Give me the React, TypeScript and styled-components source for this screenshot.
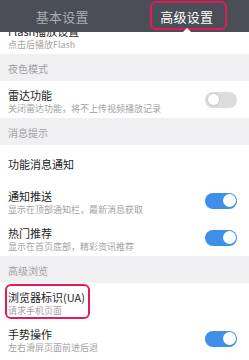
import React from "react";
import styled, { createGlobalStyle, css } from "styled-components";

const Global = createGlobalStyle`
  html, body { margin: 0; padding: 0; background: #fff; }
  body {
    width: 249px; height: 360px; overflow: hidden;
    font-family: "Noto Sans CJK SC", "Noto Sans", sans-serif;
  }
`;

const Page = styled.div`
  display: flex;
  flex-direction: column;
  width: 249px;
  height: 360px;
  overflow: hidden;
  background: #fff;
`;

const Header = styled.div`
  position: relative;
  z-index: 2;
  flex: 0 0 32px;
  height: 32px;
  display: grid;
  grid-template-columns: 1fr 1fr;
  background: #4a4f57;
`;

const Tab = styled.div<{ $active?: boolean }>`
  position: relative;
  display: flex;
  align-items: center;
  justify-content: center;
  font-size: 13px;
  letter-spacing: 0.3px;
  color: ${(p) => (p.$active ? "#ffffff" : "#a8adb4")};
  ${(p) =>
    p.$active &&
    css`
      &::after {
        content: "";
        position: absolute;
        bottom: 0;
        left: 50%;
        transform: translateX(-50%);
        border-left: 4px solid transparent;
        border-right: 4px solid transparent;
        border-bottom: 4px solid #ffffff;
      }
    `}
`;

const Highlight = styled.span<{ $inset: string }>`
  position: relative;
  line-height: 17px;
  &::before {
    content: "";
    position: absolute;
    inset: ${(p) => p.$inset};
    border: 2.5px solid #e5185a;
    border-radius: 6px;
    pointer-events: none;
  }
`;

const Viewport = styled.div`
  flex: 1;
  overflow: hidden;
`;

const List = styled.div`
  margin-top: -15px;
  display: flex;
  flex-direction: column;
`;

const Section = styled.div`
  height: 27px;
  display: flex;
  align-items: center;
  padding-left: 8px;
  padding-top: 1px;
  box-sizing: border-box;
  background: #f0f0f2;
  color: #a0a0a0;
  font-size: 10px;
`;

const Row = styled.div`
  height: 37px;
  display: flex;
  align-items: center;
  justify-content: space-between;
  padding: 0 12px 0 8px;
  box-sizing: border-box;
  background: #fff;
`;

const Texts = styled.div`
  display: flex;
  flex-direction: column;
  align-self: flex-start;
  padding-top: 6px;
`;

const TextBox = styled.div`
  position: relative;
  display: flex;
  flex-direction: column;
`;

const Title = styled.div`
  font-size: 11px;
  line-height: 16px;
  color: #1e1e1e;
`;

const Sub = styled.div`
  font-size: 9px;
  line-height: 12px;
  color: #a3a3a3;
`;

const Toggle = styled.div<{ $on?: boolean }>`
  position: relative;
  width: 32px;
  height: 16px;
  border-radius: 8px;
  flex: 0 0 auto;
  background: ${(p) => (p.$on ? "#3f8ee8" : "#dcdcdc")};
  &::after {
    content: "";
    position: absolute;
    top: 1.5px;
    ${(p) => (p.$on ? "right: 1.5px;" : "left: 1.5px;")}
    width: 13px;
    height: 13px;
    border-radius: 50%;
    background: #fff;
    box-sizing: border-box;
    ${(p) => !p.$on && "border: 1px solid #c9c9c9;"}
  }
`;

const UABox = styled(TextBox)`
  &::before {
    content: "";
    position: absolute;
    inset: -5px -5px -2px -3px;
    border: 2.5px solid #e5185a;
    border-radius: 6px;
    pointer-events: none;
  }
`;

type Item = {
  title: string;
  sub?: string;
  toggle?: boolean;
  highlight?: boolean;
};

const SettingRow = ({ title, sub, toggle, highlight }: Item) => {
  const Box = highlight ? UABox : TextBox;
  return (
    <Row>
      {sub ? (
        <Texts>
          <Box>
            <Title>{title}</Title>
            <Sub>{sub}</Sub>
          </Box>
        </Texts>
      ) : (
        <Title>{title}</Title>
      )}
      {toggle !== undefined && <Toggle $on={toggle} />}
    </Row>
  );
};

export default function App() {
  return (
    <>
      <Global />
      <Page>
        <Header>
          <Tab>基本设置</Tab>
          <Tab $active>
            <Highlight $inset="-7px -14px -5px -10px">高级设置</Highlight>
          </Tab>
        </Header>
        <Viewport>
          <List>
            <SettingRow title="Flash播放设置" sub="点击后播放Flash" />
            <Section>夜色模式</Section>
            <SettingRow title="雷达功能" sub="关闭雷达功能，将不上传视频播放记录" toggle={false} />
            <Section>消息提示</Section>
            <SettingRow title="功能消息通知" />
            <SettingRow title="通知推送" sub="显示在顶部通知栏，最新消息获取" toggle={true} />
            <SettingRow title="热门推荐" sub="显示在首页底部，精彩资讯推荐" toggle={true} />
            <Section>高级浏览</Section>
            <SettingRow title="浏览器标识(UA)" sub="请求手机页面" highlight />
            <SettingRow title="手势操作" sub="左右滑屏页面前进后退" toggle={true} />
          </List>
        </Viewport>
      </Page>
    </>
  );
}
